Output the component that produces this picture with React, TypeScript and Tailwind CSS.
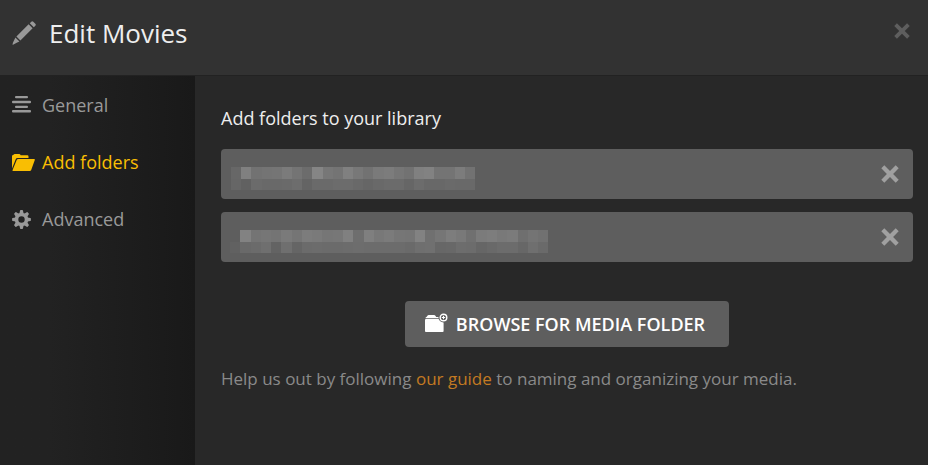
import type { ReactNode } from "react";

type NavItem = { label: string; icon: ReactNode; active?: boolean };
type Folder = { id: string; cell: number; offset: string; top: string[]; bottom: string[] };

const navItems: NavItem[] = [
  { label: "General", icon: <LinesIcon /> },
  { label: "Add folders", icon: <FolderOpenIcon />, active: true },
  { label: "Advanced", icon: <GearIcon /> },
];

// Folder paths are shown censored: each entry is the grey of one mosaic block
const folders: Folder[] = [
  {
    id: "first folder",
    cell: 10.17,
    offset: "pl-2.5 pt-2",
    top: "67 80 72 74 75 7b 74 6c 85 77 74 80 78 72 7a 7c 76 72 80 82 74 74 7c 72".split(" "),
    bottom: "66 61 6b 69 69 6a 6d 64 6a 6a 6c 6c 69 66 69 6b 6b 66 6c 68 68 6a 69 69".split(" "),
  },
  {
    id: "second folder",
    cell: 10.27,
    offset: "pl-[9px] pt-2",
    top: "5e 82 74 76 74 7a 75 7c 7a 76 77 80 6e 7f 78 7b 76 75 82 70 76 7d 79 70 7b 7d 79 7b 6f 74 71".split(" "),
    bottom: "61 69 6b 6f 63 6f 65 6b 6c 6b 6b 6c 6d 6c 6c 6c 6c 6a 6f 70 67 68 6d 6c 66 69 6c 6c 67 6f 6a".split(" "),
  },
];

function PencilIcon() {
  return (
    <svg className="size-6" viewBox="0 0 24 24" fill="currentColor" aria-hidden="true">
      <path d="M19.3.7a1.4 1.4 0 0 1 2 0l2 2a1.4 1.4 0 0 1 0 2l-1.5 1.5-4-4zM16.6 3.3l4 4L8.4 19.4l-4-4zM3.4 16.5l4 4-2.7 1.3L.6 24 .8 22z" />
    </svg>
  );
}

function LinesIcon() {
  return (
    <svg className="w-[19px] h-[19px]" viewBox="0 0 19 19" fill="currentColor" aria-hidden="true">
      <rect x="3" y="0" width="13" height="2.2" rx="1" />
      <rect x="0" y="4.8" width="19" height="2.4" rx="1" />
      <rect x="3" y="9.8" width="13" height="2.2" rx="1" />
      <rect x="0" y="14" width="19" height="2.4" rx="1" />
    </svg>
  );
}

function FolderOpenIcon() {
  return (
    <svg className="w-[23px] h-[17px]" viewBox="0 0 23 17" fill="currentColor" aria-hidden="true">
      <path d="M0 14.5V2.2Q0 1 1.2 1L2 .3Q2.3 0 2.8 0h4.4q.5 0 .8.3l.7.9h6.6q1.2 0 1.2 1.2v1.7H5.5q-1.3 0-1.8 1.2z" />
      <path d="M6.2 4.9h15.9q1 0 .7 1l-3.6 10q-.4 1.1-1.5 1.1H1.2q-.9 0-.6-.9L4.8 5.8q.4-.9 1.4-.9z" />
    </svg>
  );
}

function GearIcon() {
  return (
    <svg className="size-[19px]" viewBox="-9.5 -9.5 19 19" fill="currentColor" aria-hidden="true">
      <path
        fillRule="evenodd"
        d="M-6.8 0a6.8 6.8 0 1 0 13.6 0a6.8 6.8 0 1 0-13.6 0zM-3.2 0a3.2 3.2 0 1 1 6.4 0a3.2 3.2 0 1 1-6.4 0z"
      />
      {[0, 45, 90, 135, 180, 225, 270, 315].map((angle) => (
        <path key={angle} d="M-2.1-6 -1.5-8.8Q-1.3-9.4 -.8-9.4H.8Q1.3-9.4 1.5-8.8L2.1-6z" transform={`rotate(${angle})`} />
      ))}
    </svg>
  );
}

function FolderAddIcon() {
  return (
    <svg className="w-[23px] h-[22px]" viewBox="0 0 23 22" aria-hidden="true">
      <mask id="badge-gap">
        <rect width="23" height="22" fill="white" />
        <circle cx="18.5" cy="4.5" r="5" fill="black" />
      </mask>
      <g fill="currentColor" mask="url(#badge-gap)">
        <path d="M.6 5.3V4.8Q.6 4 1.5 3.9L2.6 2.6Q3 2.1 3.6 2.1h5.6q.6 0 1 .5l1 1.3h4.6v1.4z" />
        <path d="M.9 5.9h17.7v12.2q0 .9-.9.9H.9q-.9 0-.9-.9V6.8q0-.9.9-.9z" />
      </g>
      <circle cx="18.5" cy="4.5" r="3.3" fill="none" stroke="currentColor" strokeWidth="1.4" />
      <path d="M18.5 2.8v3.4M16.8 4.5h3.4" stroke="currentColor" strokeWidth="1" />
    </svg>
  );
}

function CrossIcon({ className }: { className: string }) {
  return (
    <svg className={className} viewBox="0 0 18 18" fill="currentColor" aria-hidden="true">
      <path d="M3.3.3 9 5.9 14.7.3 17.7 3.3 12.1 9l5.6 5.7-3 3L9 12.1l-5.7 5.6-3-3L5.9 9 .3 3.3z" />
    </svg>
  );
}

function FolderRow({ folder }: { folder: Folder }) {
  const width = Math.round(folder.top.length * folder.cell);
  return (
    <li className="flex h-[50px] items-center justify-between rounded bg-[#5e5e5e] pr-3.5">
      <div className={folder.offset}>
        <svg
          width={width}
          height="23"
          viewBox={`0 0 ${width} 23`}
          shapeRendering="crispEdges"
          role="img"
          aria-label={folder.id}
        >
          {folder.top.map((grey, i) => (
            <rect key={i} x={i * folder.cell} y="0" width={folder.cell} height="12" fill={`#${grey}${grey}${grey}`} />
          ))}
          {folder.bottom.map((grey, i) => (
            <rect key={i} x={i * folder.cell} y="12" width={folder.cell} height="11" fill={`#${grey}${grey}${grey}`} />
          ))}
        </svg>
      </div>
      <button type="button" aria-label={`Remove ${folder.id}`} className="text-[#a0a0a0]">
        <CrossIcon className="size-[18px]" />
      </button>
    </li>
  );
}

export default function App() {
  return (
    <div className="flex min-h-screen flex-col bg-[#282828] font-['Open_Sans',sans-serif] text-[#eeeeee]">
      <header className="flex h-[76px] items-start justify-between border-b border-[#222222] bg-[#323232] pl-3 pr-[18px]">
        <div className="flex items-center gap-[13px] pt-[13px]">
          <span className="text-[#999999]">
            <PencilIcon />
          </span>
          <h1 className="text-[26px] leading-10">Edit Movies</h1>
        </div>
        <button type="button" aria-label="Close" className="pt-[23px] text-[#5e5e5e]">
          <CrossIcon className="size-4" />
        </button>
      </header>

      <div className="flex flex-1">
        <nav className="w-[195px] shrink-0 bg-linear-to-r from-[#222222] from-25% to-[#191919] py-[15px]">
          <ul className="flex flex-col gap-[29px]">
            {navItems.map((item) => (
              <li key={item.label}>
                <a
                  href="#"
                  className={
                    item.active
                      ? "flex h-7 items-center pl-3 text-lg text-[#f9be03]"
                      : "flex h-7 items-center pl-3 text-lg text-[#999999]"
                  }
                >
                  <span className="w-[30px]">{item.icon}</span>
                  {item.label}
                </a>
              </li>
            ))}
          </ul>
        </nav>

        <main className="flex-1 pl-[26px] pr-[15px] pt-7">
          <h2 className="text-lg">Add folders to your library</h2>
          <ul className="mt-[17px] flex flex-col gap-[13px]">
            {folders.map((folder) => (
              <FolderRow key={folder.id} folder={folder} />
            ))}
          </ul>
          <div className="mt-[39px] flex justify-center">
            <button
              type="button"
              className="flex h-[46px] items-center gap-2 rounded bg-[#5e5e5e] pl-5 pr-6 text-lg font-semibold text-white"
            >
              <FolderAddIcon />
              BROWSE FOR MEDIA FOLDER
            </button>
          </div>
          <p className="mt-5 text-[17px] leading-6 text-[#8a8a8a]">
            Help us out by following{" "}
            <a href="#" className="text-[#c37a22]">
              our guide
            </a>{" "}
            to naming and organizing your media.
          </p>
        </main>
      </div>
    </div>
  );
}
